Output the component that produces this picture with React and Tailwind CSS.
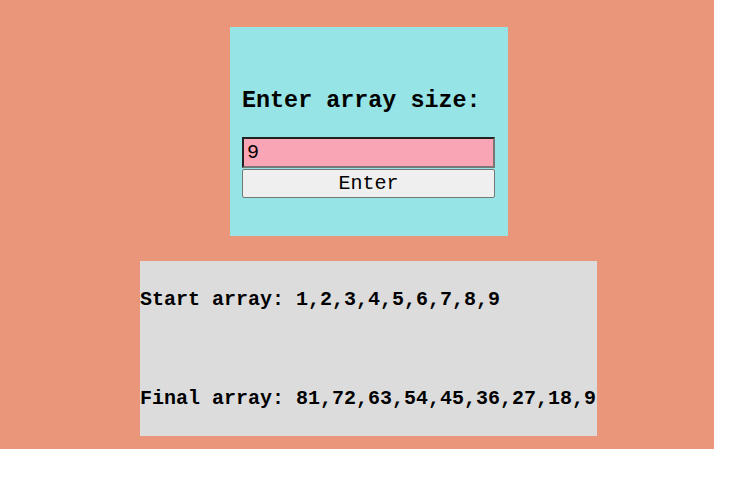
import { useState } from 'react'

const mono = { fontFamily: '"Liberation Mono", "Courier New", monospace' }

export default function App() {
  const [size, setSize] = useState('9')
  const n = parseInt(size, 10) || 0
  const start = Array.from({ length: n }, (_, i) => i + 1)
  const final = start.map((v) => v * n).reverse()

  return (
    <div className="w-[714px] h-[449px] bg-[#e9967a] pt-[27px]" style={mono}>
      {/* ── Input card ── */}
      <div className="ml-[230px] w-[278px] h-[209px] bg-[#96e4e5] pt-[61px] pl-[12px]">
        <h2 className="text-[23.4px] leading-[27px] font-bold text-black">Enter array size:</h2>
        <input
          value={size}
          onChange={(e) => setSize(e.target.value)}
          className="mt-[22px] block w-[253px] h-[31px] bg-[#f9a5b6] border-2 border-t-[#222] border-l-[#222] border-b-[#777] border-r-[#777] pl-[3px] text-[20px] text-black outline-none"
          style={mono}
        />
        <button
          className="mt-[1px] block w-[253px] h-[29px] bg-[#efefef] border border-[#767676] rounded-[2px] text-[20px] leading-[27px] text-black"
          style={mono}
        >
          Enter
        </button>
      </div>

      {/* ── Result card ── */}
      <div className="mt-[25px] ml-[140px] w-[457px] h-[175px] bg-[#dcdcdc] pt-[27px] text-[20px] leading-[23px] font-bold text-black whitespace-nowrap">
        <p>Start array: {start.join(',')}</p>
        <p className="mt-[76px]">Final array: {final.join(',')}</p>
      </div>
    </div>
  )
}
